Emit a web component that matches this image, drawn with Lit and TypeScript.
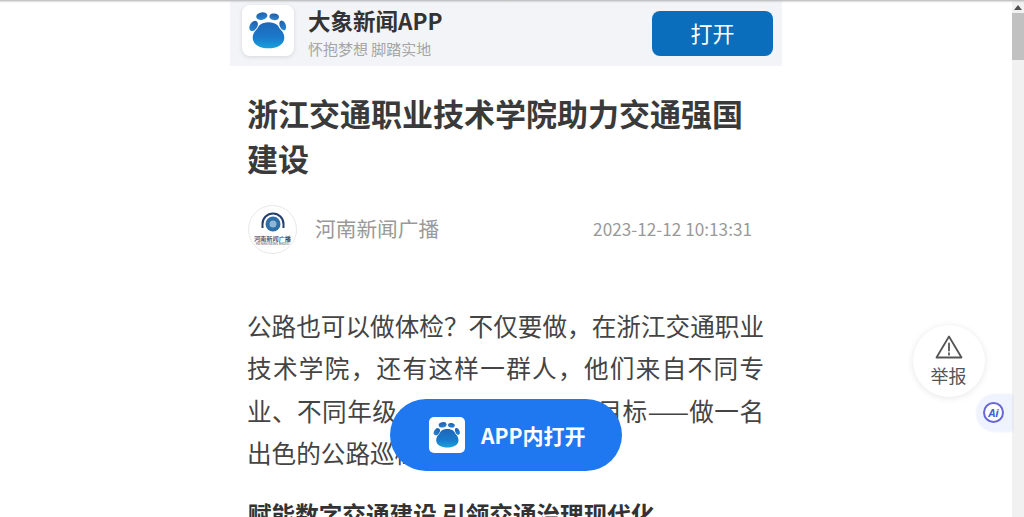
import { LitElement, html, css, svg } from "lit";
import { customElement } from "lit/decorators.js";

const paw = (id: string) => svg`
  <svg class="paw" viewBox="0 0 52 52" aria-hidden="true">
    <defs>
      <linearGradient id=${id} x1="0" y1="0" x2="0" y2="1">
        <stop offset="0" stop-color="#1f66b8"/>
        <stop offset="0.6" stop-color="#1a7acb"/>
        <stop offset="1" stop-color="#17a2dd"/>
      </linearGradient>
      <linearGradient id="${id}t" x1="0" y1="0" x2="0" y2="1">
        <stop offset="0" stop-color="#1c5fae"/>
        <stop offset="1" stop-color="#2a86d2"/>
      </linearGradient>
    </defs>
    <path fill="url(#${id})" d="M26.500 17.500c3.500 0 6.500.8 9 2.800 1.300 1.100 1.800 3.200 3.500 5 2.400 2.300 3.600 5.200 3.600 8.200 0 3.600-2 6.400-5 8.100-3 1.800-7 2.600-11.100 2.600s-8.100-.8-11.100-2.600c-3-1.700-5-4.500-5-8.100 0-3 1.200-5.900 3.600-8.200 1.700-1.800 2.200-3.900 3.500-5 2.500-2 5.500-2.800 9-2.800z"/>
    <ellipse fill="url(#${id}t)" cx="19.700" cy="11.300" rx="5.800" ry="3.800" transform="rotate(-12 19.700 11.300)"/>
    <ellipse fill="url(#${id}t)" cx="32.300" cy="12" rx="4.900" ry="3.300" transform="rotate(10 32.300 12)"/>
    <ellipse fill="url(#${id}t)" cx="11.300" cy="21.300" rx="3.800" ry="5.700" transform="rotate(32 11.300 21.300)"/>
    <ellipse fill="url(#${id}t)" cx="41" cy="20.800" rx="3.100" ry="5.200" transform="rotate(-22 41 20.800)"/>
  </svg>`;

@customElement("app-root")
export class AppRoot extends LitElement {
  static styles = css`
    :host { display: block; width: 1024px; height: 517px; overflow: hidden; position: relative; background: #fff;
      font-family: "Noto Sans CJK SC", "Noto Sans", sans-serif; }
    .page { display: flex; height: 517px; }
    .main { flex: 1; display: flex; justify-content: center; overflow: hidden; }
    .col { width: 552px; flex: none; }
    .topline { position: absolute; left: 0; right: 0; top: 0; height: 3px; background: linear-gradient(#b5b5b5, rgba(190,190,190,.35) 55%, rgba(255,255,255,0)); }
    .banner { height: 66px; box-sizing: border-box; background: #f2f4f8; padding: 5px 9px 0 12px; display: flex; align-items: flex-start; }
    .logo { width: 52px; height: 51px; background: #fff; border-radius: 8px; box-shadow: 0 1px 4px rgba(0,0,0,.12); flex: none; }
    .paw { width: 100%; height: 100%; display: block; }
    .btxt { margin-left: 14px; flex: 1; }
    .bt { font-size: 22.500px; line-height: 30px; font-weight: 700; color: #333; }
    .bs { font-size: 15px; line-height: 20px; color: #a5a5a5; margin-top: 4px; }
    .open { width: 121px; height: 45px; margin-top: 5.500px; border-radius: 8px; background: #0a6ebc; color: #fff; font-size: 22px; line-height: 42px;
      text-align: center; }
    .art { padding: 25px 18px 0; }
    h1 { margin: 0; font-size: 31px; line-height: 44.500px; font-weight: 700; color: #3a3a3a; width: 516px; transform: translateX(-1px); }
    .meta { display: flex; align-items: center; margin-top: 24px; height: 50px; }
    .av { width: 49px; height: 49px; border-radius: 50%; border: 1px solid #e8e8e8; box-sizing: border-box; flex: none;
      display: flex; flex-direction: column; align-items: center; overflow: hidden; padding-top: 6px; }
    .av svg { width: 26px; height: 22px; display: block; flex: none; }
    .av .cn { font-size: 6.200px; line-height: 7px; margin-top: 1px; color: #2a3a55; white-space: nowrap; font-weight: 500; }
    .av .en { font-size: 3.500px; line-height: 4px; color: #445; white-space: nowrap; }
    .name { margin-left: 18px; padding-bottom: 2px; font-size: 20.700px; color: #999; }
    .time { margin-left: auto; margin-right: 12px; padding-bottom: 2px; font-size: 17.200px; color: #999; }
    .body { margin-top: 50px; }
    p { margin: 0; font-size: 24.600px; line-height: 42.400px; color: #444; width: 517px; text-align: justify; transform: translateX(-1px); }
    h2 { margin: 19px 0 0; font-size: 23.600px; line-height: 42px; font-weight: 700; color: #333; white-space: nowrap; }
    .bar { width: 12px; flex: none; background: #f1f1f1; position: relative; }
    .up { width: 0; height: 0; border: 4px solid transparent; border-bottom: 5px solid #505050; border-top: 0; margin: 5px auto 0; }
    .thumb { position: absolute; left: 0; right: 0; top: 13px; height: 47px; background: #c1c1c1; }
    .fab { position: absolute; left: 390px; top: 399px; width: 232px; height: 72px; border-radius: 36px; background: #1f78ef;
      display: flex; align-items: center; padding-left: 39px; box-sizing: border-box; color: #fff; font-size: 21px; font-weight: 700; }
    .fab .ic { width: 36px; height: 36px; background: #fff; border-radius: 5px; margin-right: 16px; flex: none; }
    .report { position: absolute; left: 912.500px; top: 325px; width: 72px; height: 72px; border-radius: 50%; background: #fff;
      box-shadow: 0 1px 7px rgba(0,0,0,.1); display: flex; flex-direction: column; align-items: center; color: #555; font-size: 18px; line-height: 22px; }
    .report svg { width: 30px; height: 26px; margin-top: 9px; display: block; }
    .report span { margin-top: 4px; }
    .ai { position: absolute; left: 977px; top: 395px; width: 35px; height: 36px; border-radius: 18px 0 0 18px; background: #eef3fe;
      box-shadow: 0 0 3px rgba(120,140,230,.25); }
    .ai i { position: absolute; left: 6px; top: 7px; width: 21px; height: 21px; border-radius: 50%; border: 2px solid #6a66d4; box-sizing: border-box;
      background: #fff; font: italic 700 11px/17px "Noto Sans", sans-serif; color: #3563dc; text-align: center; }
  `;

  render() {
    return html`
      <div class="page">
        <div class="main">
          <div class="col">
            <div class="banner">
              <div class="logo">${paw("g1")}</div>
              <div class="btxt">
                <div class="bt">大象新闻APP</div>
                <div class="bs">怀抱梦想 脚踏实地</div>
              </div>
              <div class="open">打开</div>
            </div>
            <div class="art">
              <h1>浙江交通职业技术学院助力交通强国建设</h1>
              <div class="meta">
                <div class="av">
                  <svg viewBox="0 0 26 22" aria-hidden="true">
                    <circle cx="13" cy="12" r="7.500" fill="#2f6fa8"/>
                    <circle cx="13" cy="12" r="3.500" fill="#8fb6d6"/>
                    <path d="M2.500 16V12a10.500 10.500 0 0 1 21 0v4" fill="none" stroke="#23406e" stroke-width="2"/>
                  </svg>
                  <div class="cn">河南新闻广播</div>
                  <div class="en">HENAN NEWS RADIO</div>
                </div>
                <div class="name">河南新闻广播</div>
                <div class="time">2023-12-12 10:13:31</div>
              </div>
              <div class="body">
                <p>公路也可以做体检？不仅要做，在浙江交通职业技术学院，还有这样一群人，他们来自不同专业、不同年级，却有着一个共同目标——做一名出色的公路巡检员。</p>
                <h2>赋能数字交通建设 引领交通治理现代化</h2>
              </div>
            </div>
          </div>
        </div>
        <div class="bar"><div class="up"></div><div class="thumb"></div></div>
      </div>
      <div class="topline"></div>
      <div class="fab"><div class="ic">${paw("g2")}</div>APP内打开</div>
      <div class="report">
        <svg viewBox="0 0 30 26" aria-hidden="true">
          <path d="M15 2.500 L27.500 23.500 H2.500 Z" fill="none" stroke="#555" stroke-width="1.800" stroke-linejoin="round"/>
          <path d="M15 9.500v7M15 19.200v1.500" fill="none" stroke="#555" stroke-width="1.800" stroke-linecap="round"/>
        </svg>
        <span>举报</span>
      </div>
      <div class="ai"><i>Ai</i></div>
    `;
  }
}
